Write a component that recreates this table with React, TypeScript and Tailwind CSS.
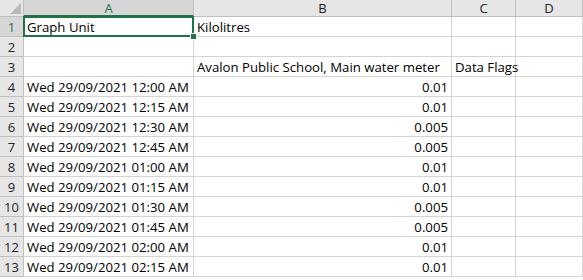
const rows: [string, string, string][] = [
  ['Graph Unit', 'Kilolitres', ''],
  ['', '', ''],
  ['', 'Avalon Public School, Main water meter', 'Data Flags'],
  ['Wed 29/09/2021 12:00 AM', '0.01', ''],
  ['Wed 29/09/2021 12:15 AM', '0.01', ''],
  ['Wed 29/09/2021 12:30 AM', '0.005', ''],
  ['Wed 29/09/2021 12:45 AM', '0.005', ''],
  ['Wed 29/09/2021 01:00 AM', '0.01', ''],
  ['Wed 29/09/2021 01:15 AM', '0.01', ''],
  ['Wed 29/09/2021 01:30 AM', '0.005', ''],
  ['Wed 29/09/2021 01:45 AM', '0.005', ''],
  ['Wed 29/09/2021 02:00 AM', '0.01', ''],
  ['Wed 29/09/2021 02:15 AM', '0.01', ''],
];

const cols = ['A', 'B', 'C', 'D'];

export default function App() {
  return (
    <div className="w-[583px] h-[280px] overflow-hidden bg-white font-['Open_Sans',sans-serif] text-[13.2px] text-black">
      <div className="grid grid-cols-[24px_170px_258px_64px_67px] grid-rows-[17px] auto-rows-[20px]">
        {/* corner */}
        <div className="relative bg-[#e6e6e6] border-r border-b border-[#bfbfbf]">
          <svg className="absolute right-[2px] bottom-[2px]" width="11" height="11" viewBox="0 0 11 11">
            <polygon points="11,0 11,11 0,11" fill="#b8b8b8" />
          </svg>
        </div>
        {cols.map((c) => (
          <div
            key={c}
            className={`flex items-center justify-center leading-[14px] text-[13px] border-r border-[#bfbfbf] ${c === 'A' ? 'bg-[#d6d6d6] border-b-2 border-b-[#217346] text-[#217346]' : 'bg-[#e6e6e6] border-b border-b-[#bfbfbf] text-[#222]'}`}
          >
            {c}
          </div>
        ))}

        {rows.map((r, i) => (
          <Row key={i} n={i + 1} cells={r} />
        ))}
      </div>
    </div>
  );
}

function Row({ n, cells }: { n: number; cells: [string, string, string] }) {
  const numeric = /^[0-9.]+$/.test(cells[1]);
  return (
    <>
      <div
        className={`flex items-center justify-center pt-[1px] leading-[15px] text-[13px] border-r border-b border-[#bfbfbf] ${n === 1 ? 'bg-[#d6d6d6] text-[#217346]' : 'bg-[#e6e6e6] text-[#222]'}`}
      >
        {n}
      </div>
      <div
        className={`relative flex items-end leading-[17px] px-[3px] whitespace-nowrap border-r border-b border-[#d4d4d4] ${n === 1 ? 'z-10' : ''}`}
      >
        {cells[0]}
        {n === 1 && (
          <>
            <div className="absolute -left-px -top-px -right-px -bottom-px border-2 border-[#217346] pointer-events-none" />
            <div className="absolute -right-[4px] -bottom-[4px] w-[7px] h-[7px] bg-[#217346] border border-white" />
          </>
        )}
      </div>
      <div
        className={`flex items-end leading-[17px] px-[3px] whitespace-nowrap border-r border-b border-[#d4d4d4] ${numeric ? 'justify-end' : ''}`}
      >
        {cells[1]}
      </div>
      <div className="flex items-end leading-[17px] px-[3px] whitespace-nowrap border-r border-b border-[#d4d4d4]">
        {cells[2]}
      </div>
      <div className="border-r border-b border-[#d4d4d4]" />
    </>
  );
}
